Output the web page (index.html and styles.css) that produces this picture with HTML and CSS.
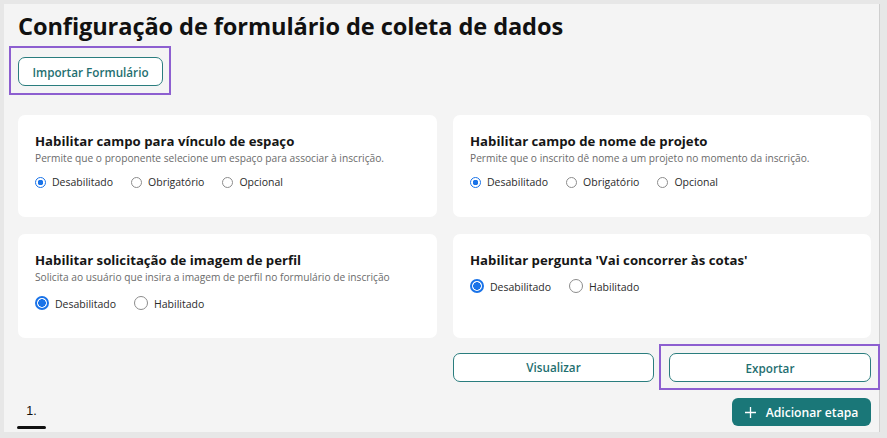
FILE: index.html
```html
<!DOCTYPE html>
<html lang="pt-BR">
<head>
<meta charset="utf-8">
<title>Configuração de formulário de coleta de dados</title>
<link rel="stylesheet" href="styles.css">
</head>
<body>
<div class="frame">
  <main class="panel">
    <h1 class="title">Configuração de formulário de coleta de dados</h1>
    <div class="highlight highlight-import">
      <button class="btn btn-outline btn-import">Importar Formulário</button>
    </div>

    <section class="cards">
      <div class="card">
        <h2 class="card-title">Habilitar campo para vínculo de espaço</h2>
        <p class="card-desc">Permite que o proponente selecione um espaço para associar à inscrição.</p>
        <div class="options">
          <label class="option"><input type="radio" name="espaco" checked><span>Desabilitado</span></label>
          <label class="option"><input type="radio" name="espaco"><span>Obrigatório</span></label>
          <label class="option"><input type="radio" name="espaco"><span>Opcional</span></label>
        </div>
      </div>
      <div class="card">
        <h2 class="card-title">Habilitar campo de nome de projeto</h2>
        <p class="card-desc">Permite que o inscrito dê nome a um projeto no momento da inscrição.</p>
        <div class="options">
          <label class="option"><input type="radio" name="projeto" checked><span>Desabilitado</span></label>
          <label class="option"><input type="radio" name="projeto"><span>Obrigatório</span></label>
          <label class="option"><input type="radio" name="projeto"><span>Opcional</span></label>
        </div>
      </div>
      <div class="card">
        <h2 class="card-title">Habilitar solicitação de imagem de perfil</h2>
        <p class="card-desc">Solicita ao usuário que insira a imagem de perfil no formulário de inscrição</p>
        <div class="options options-lg">
          <label class="option"><input type="radio" name="imagem" checked><span>Desabilitado</span></label>
          <label class="option"><input type="radio" name="imagem"><span>Habilitado</span></label>
        </div>
      </div>
      <div class="card">
        <h2 class="card-title">Habilitar pergunta 'Vai concorrer às cotas'</h2>
        <div class="options options-lg options-tight">
          <label class="option"><input type="radio" name="cotas" checked><span>Desabilitado</span></label>
          <label class="option"><input type="radio" name="cotas"><span>Habilitado</span></label>
        </div>
      </div>
    </section>

    <div class="actions">
      <button class="btn btn-outline btn-wide">Visualizar</button>
      <div class="highlight highlight-export">
        <button class="btn btn-outline btn-wide btn-export">Exportar</button>
      </div>
    </div>

    <div class="footer">
      <div class="step">
        <span class="step-num">1.</span>
        <span class="step-bar"></span>
      </div>
      <button class="btn btn-primary">
        <svg class="plus" width="11" height="11" viewBox="0 0 11 11" aria-hidden="true"><path d="M5.5 0v11M0 5.5h11" stroke="#fff" stroke-width="1.3" fill="none"/></svg>
        <span>Adicionar etapa</span>
      </button>
    </div>
  </main>
</div>
</body>
</html>
```

FILE: styles.css
```css
* { box-sizing: border-box; }

html, body {
  margin: 0;
  padding: 0;
}

body {
  background: #e7e7e7;
  font-family: "Open Sans", "Noto Sans", sans-serif;
  color: #1b1b1b;
  width: 887px;
  height: 438px;
  overflow: hidden;
}

.frame {
  padding: 4px 0 0 4px;
}

.panel {
  width: 876px;
  height: 428px;
  background: #f4f4f4;
  border-right: 1px solid #cfcfcf;
  padding: 6px 8px 0 14px;
  display: flex;
  flex-direction: column;
}

.title {
  margin: 0;
  font-size: 23.6px;
  line-height: 32px;
  font-weight: 700;
  color: #111;
  letter-spacing: -0.1px;
}

.highlight {
  border: 2px solid #8d5fd0;
}

.highlight-import {
  align-self: flex-start;
  margin: 4px 0 0 -9px;
  padding: 9px 6px 7px 7px;
}

.btn {
  font-family: inherit;
  cursor: pointer;
  border-radius: 7px;
  font-weight: 600;
  font-size: 11.7px;
}

.btn-outline {
  background: #fff;
  border: 1.5px solid #2a7d7e;
  color: #1f6f70;
  height: 29px;
}

.btn-import {
  width: 145px;
  padding: 0;
}

.cards {
  margin-top: 20px;
  display: grid;
  grid-template-columns: 419px 418px;
  column-gap: 16px;
  row-gap: 17px;
  grid-template-rows: 102px 104px;
}

.card {
  background: #fff;
  border-radius: 7px;
  padding: 16px 17px 0 17px;
}

.card-title {
  margin: 0;
  font-size: 13.2px;
  line-height: 20px;
  font-weight: 700;
  color: #161616;
}

.card-desc {
  margin: 0;
  font-size: 10.2px;
  line-height: 15px;
  color: #6b6b6b;
}

.options {
  display: flex;
  gap: 18px;
  margin-top: 9px;
}

.option {
  display: flex;
  align-items: center;
  gap: 6px;
  font-size: 10.5px;
  color: #2b2b2b;
}

.option input {
  appearance: none;
  -webkit-appearance: none;
  margin: 0;
  width: 11px;
  height: 11px;
  border-radius: 50%;
  border: 1px solid #8c8c8c;
  background: #fff;
}

.option input:checked {
  border: 1.5px solid #1a73e8;
  background: radial-gradient(circle, #1a73e8 0 2.6px, #fff 3px);
}

.options-lg {
  margin-top: 12px;
}

.options-lg .option input {
  width: 14px;
  height: 14px;
  margin-top: -3px;
}

.options-lg .option input:checked {
  border: 2px solid #1a73e8;
  background: radial-gradient(circle, #1a73e8 0 3.6px, #fff 4px);
}

.options-tight {
  margin-top: 10px;
}

.actions {
  margin-top: 6px;
  margin-right: -9px;
  display: flex;
  justify-content: flex-end;
  align-items: center;
  gap: 5px;
}

.btn-wide {
  width: 201px;
  padding: 0;
}

.highlight-export {
  padding: 7px 7px 6px 8px;
}

.btn-export {
  width: 202px;
}

.footer {
  margin-top: 8px;
  display: flex;
  justify-content: space-between;
  align-items: flex-start;
}

.step {
  display: flex;
  flex-direction: column;
  align-items: center;
  width: 29px;
  margin-left: -1px;
  padding-top: 6px;
}

.step-num {
  font-family: "Liberation Sans", Arial, sans-serif;
  font-size: 12.5px;
  line-height: 14px;
  color: #111;
}

.step-bar {
  margin-top: 8px;
  width: 29px;
  height: 3px;
  border-radius: 2px;
  background: #111;
}

.btn-primary {
  background: #1a7778;
  border: none;
  color: #fff;
  height: 28px;
  width: 139px;
  border-radius: 6px;
  display: flex;
  align-items: center;
  justify-content: center;
  gap: 10px;
  font-size: 12.2px;
  padding: 0;
}
```
